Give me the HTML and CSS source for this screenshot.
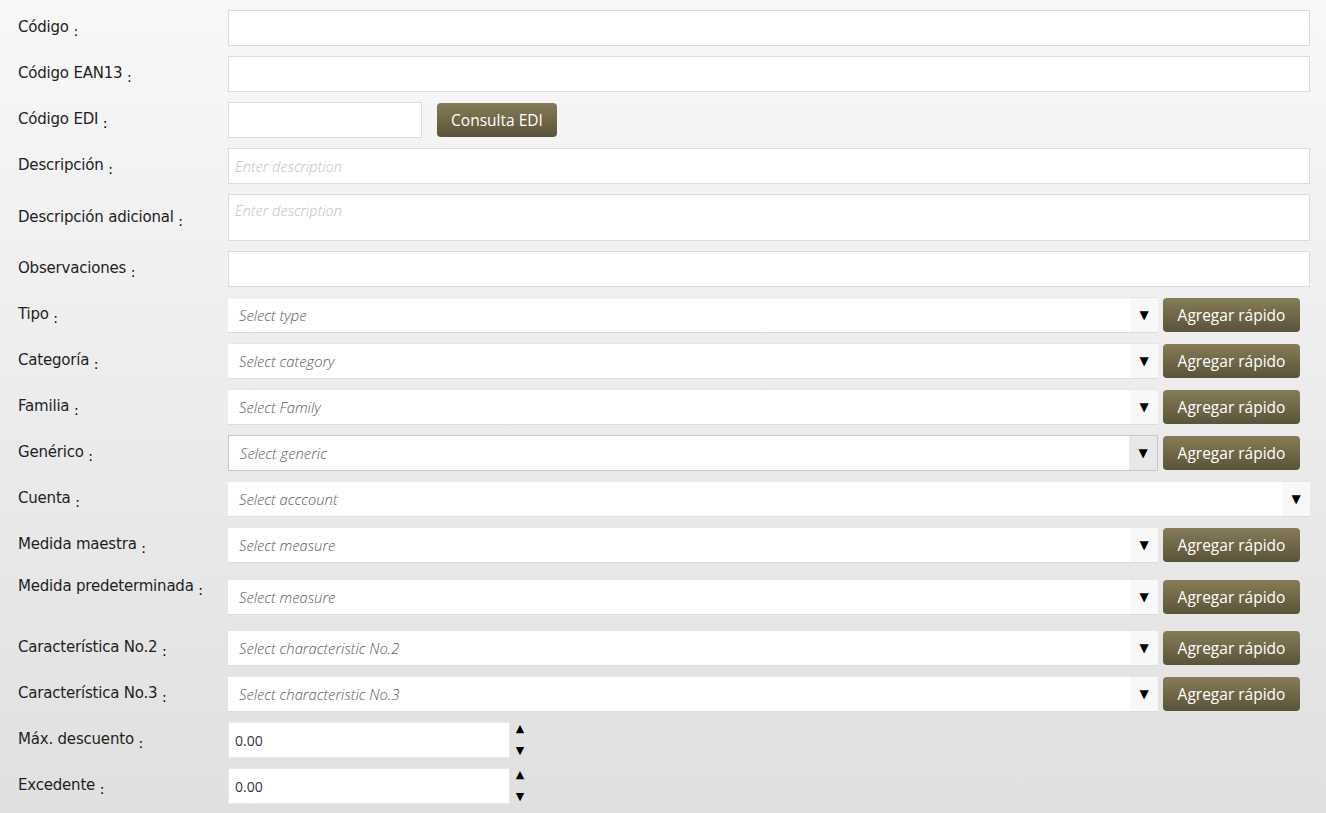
FILE: index.html
```html
<!DOCTYPE html>
<html lang="es">
  <head>
    <meta charset="UTF-8" />
    <meta name="viewport" content="width=device-width, initial-scale=1.0" />
    <title>Producto</title>
    <link rel="stylesheet" href="styles.css">
  </head>
  <body>
    <form class="product-form">
      <div class="form-row">
        <label class="field-label">Código <span class="colon">:</span></label>
        <input class="text-input" type="text" />
      </div>

      <div class="form-row">
        <label class="field-label">Código EAN13 <span class="colon">:</span></label>
        <input class="text-input" type="text" />
      </div>

      <div class="form-row">
        <label class="field-label">Código EDI <span class="colon">:</span></label>
        <input class="text-input short" type="text" />
        <button type="button" class="btn-olive edi-button">Consulta EDI</button>
      </div>

      <div class="form-row">
        <label class="field-label">Descripción <span class="colon">:</span></label>
        <input class="text-input desc" type="text" placeholder="Enter description" />
      </div>

      <div class="form-row">
        <label class="field-label">Descripción adicional <span class="colon">:</span></label>
        <textarea class="text-input desc textarea" placeholder="Enter description"></textarea>
      </div>

      <div class="form-row">
        <label class="field-label">Observaciones <span class="colon">:</span></label>
        <input class="text-input" type="text" />
      </div>

      <div class="form-row">
        <label class="field-label">Tipo <span class="colon">:</span></label>
        <div class="select-group">
          <div class="select-box"><span class="select-value">Select type</span><span class="select-arrow">▼</span></div>
          <button type="button" class="btn-olive quick-add">Agregar rápido</button>
        </div>
      </div>

      <div class="form-row">
        <label class="field-label">Categoría <span class="colon">:</span></label>
        <div class="select-group">
          <div class="select-box"><span class="select-value">Select category</span><span class="select-arrow">▼</span></div>
          <button type="button" class="btn-olive quick-add">Agregar rápido</button>
        </div>
      </div>

      <div class="form-row">
        <label class="field-label">Familia <span class="colon">:</span></label>
        <div class="select-group">
          <div class="select-box"><span class="select-value">Select Family</span><span class="select-arrow">▼</span></div>
          <button type="button" class="btn-olive quick-add">Agregar rápido</button>
        </div>
      </div>

      <div class="form-row">
        <label class="field-label">Genérico <span class="colon">:</span></label>
        <div class="select-group">
          <div class="select-box hover"><span class="select-value">Select generic</span><span class="select-arrow">▼</span></div>
          <button type="button" class="btn-olive quick-add">Agregar rápido</button>
        </div>
      </div>

      <div class="form-row">
        <label class="field-label">Cuenta <span class="colon">:</span></label>
        <div class="select-group full">
          <div class="select-box"><span class="select-value">Select acccount</span><span class="select-arrow">▼</span></div>
        </div>
      </div>

      <div class="form-row">
        <label class="field-label">Medida maestra <span class="colon">:</span></label>
        <div class="select-group">
          <div class="select-box"><span class="select-value">Select measure</span><span class="select-arrow">▼</span></div>
          <button type="button" class="btn-olive quick-add">Agregar rápido</button>
        </div>
      </div>

      <div class="form-row tall">
        <label class="field-label">Medida predeterminada <span class="colon">:</span></label>
        <div class="select-group">
          <div class="select-box"><span class="select-value">Select measure</span><span class="select-arrow">▼</span></div>
          <button type="button" class="btn-olive quick-add">Agregar rápido</button>
        </div>
      </div>

      <div class="form-row">
        <label class="field-label">Característica No.2 <span class="colon">:</span></label>
        <div class="select-group">
          <div class="select-box"><span class="select-value">Select characteristic No.2</span><span class="select-arrow">▼</span></div>
          <button type="button" class="btn-olive quick-add">Agregar rápido</button>
        </div>
      </div>

      <div class="form-row">
        <label class="field-label">Característica No.3 <span class="colon">:</span></label>
        <div class="select-group">
          <div class="select-box"><span class="select-value">Select characteristic No.3</span><span class="select-arrow">▼</span></div>
          <button type="button" class="btn-olive quick-add">Agregar rápido</button>
        </div>
      </div>

      <div class="form-row">
        <label class="field-label">Máx. descuento <span class="colon">:</span></label>
        <div class="number-box">
          <input class="text-input number" type="text" value="0.00" />
          <div class="spinner"><span>▲</span><span>▼</span></div>
        </div>
      </div>

      <div class="form-row">
        <label class="field-label">Excedente <span class="colon">:</span></label>
        <div class="number-box">
          <input class="text-input number" type="text" value="0.00" />
          <div class="spinner"><span>▲</span><span>▼</span></div>
        </div>
      </div>
    </form>
  </body>
</html>
```

FILE: styles.css
```css
html,
body {
  margin: 0;
  padding: 0;
  height: 100%;
}

body {
  font-family: "DejaVu Sans", Verdana, sans-serif;
  background: linear-gradient(to bottom, #f8f8f8 0%, #e0e0e0 100%);
  color: #222;
}

.product-form {
  padding: 10px 16px 0 18px;
  display: flex;
  flex-direction: column;
  gap: 10px;
}

.form-row {
  display: flex;
  align-items: center;
  min-height: 36px;
}

.form-row.tall {
  min-height: 47px;
}

.form-row.tall .field-label {
  align-self: flex-start;
}

.field-label {
  width: 210px;
  flex-shrink: 0;
  padding-top: 2px;
  font-size: 15px;
  line-height: 22px;
  color: #1e1e1e;
  letter-spacing: -0.2px;
}

.colon {
  vertical-align: -4px;
  font-size: 14px;
  color: #000;
}

.text-input {
  flex: 1;
  box-sizing: border-box;
  height: 36px;
  border: 1px solid #dcdcdc;
  background: #fff;
  padding: 0 6px;
  font-family: "Open Sans", sans-serif;
  font-size: 14px;
  color: #333;
  outline: none;
  margin: 0;
}

.text-input.short {
  flex: 0 0 194px;
}

.text-input.desc::placeholder {
  color: #c0c0c0;
  font-style: italic;
  font-weight: 300;
  font-size: 14.6px;
}

.text-input.textarea {
  height: 47px;
  resize: none;
  padding-top: 5px;
}

.btn-olive {
  border: none;
  border-radius: 4px;
  background: linear-gradient(to bottom, #867c57 0%, #5b5339 100%);
  color: #fff;
  font-family: "Open Sans", sans-serif;
  font-size: 15.5px;
  height: 34px;
  padding: 0;
  cursor: pointer;
}

.edi-button {
  width: 120px;
  margin-left: 15px;
}

.select-group {
  flex: 1;
  display: flex;
  align-items: center;
  gap: 5px;
  padding-right: 10px;
}

.select-group.full {
  padding-right: 0;
}

.select-box {
  flex: 1;
  display: flex;
  height: 36px;
  box-sizing: border-box;
  border-top: 1px solid #e6e6e6;
  border-bottom: 1px solid #dcdcdc;
  background: #fff;
}

.select-value {
  flex: 1;
  display: flex;
  align-items: center;
  padding-left: 11px;
  font-family: "Open Sans", sans-serif;
  font-style: italic;
  font-weight: 300;
  font-size: 14.8px;
  color: #5a5a5a;
}

.select-arrow {
  width: 28px;
  display: flex;
  align-items: center;
  justify-content: center;
  background: #f8f8f8;
  font-size: 12px;
  color: #000;
}

.select-box.hover {
  border: 1px solid #c8c8c8;
}

.select-box.hover .select-arrow {
  background: #e8e8e8;
}

.quick-add {
  width: 137px;
}

.number-box {
  display: flex;
  align-items: center;
}

.text-input.number {
  flex: 0 0 282px;
  border-color: #e8e8e8;
}

.spinner {
  display: flex;
  flex-direction: column;
  justify-content: space-between;
  width: 18px;
  height: 36px;
  margin-left: 1px;
  font-size: 11px;
  line-height: 14px;
  text-align: center;
  color: #000;
}
```
